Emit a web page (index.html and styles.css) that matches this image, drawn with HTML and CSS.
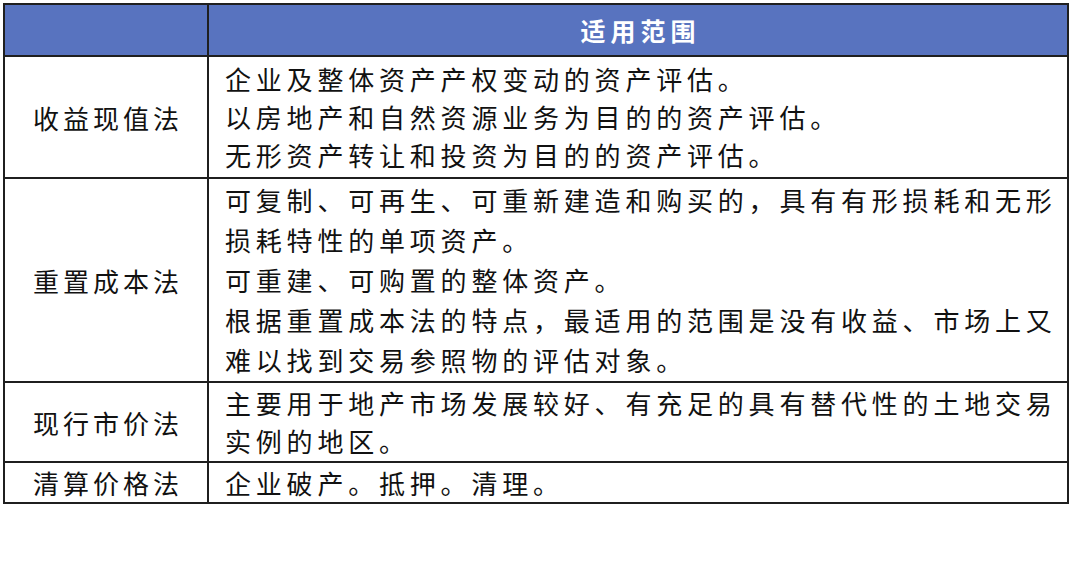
FILE: index.html
```html
<!DOCTYPE html>
<html lang="zh-CN">
<head>
<meta charset="utf-8">
<title>评估方法适用范围</title>
<link rel="stylesheet" href="styles.css">
</head>
<body>
<table class="sheet">
  <thead>
    <tr class="head-row">
      <th class="method-h"></th>
      <th class="scope-h">适用范围</th>
    </tr>
  </thead>
  <tbody>
    <tr class="r3">
      <td class="method">收益现值法</td>
      <td class="scope">
        <div class="line">企业及整体资产产权变动的资产评估。</div>
        <div class="line">以房地产和自然资源业务为目的的资产评估。</div>
        <div class="line">无形资产转让和投资为目的的资产评估。</div>
      </td>
    </tr>
    <tr class="r5">
      <td class="method">重置成本法</td>
      <td class="scope">
        <div class="line">可复制、可再生、可重新建造和购买的，具有有形损耗和无形</div>
        <div class="line">损耗特性的单项资产。</div>
        <div class="line">可重建、可购置的整体资产。</div>
        <div class="line">根据重置成本法的特点，最适用的范围是没有收益、市场上又</div>
        <div class="line">难以找到交易参照物的评估对象。</div>
      </td>
    </tr>
    <tr class="r2">
      <td class="method">现行市价法</td>
      <td class="scope">
        <div class="line">主要用于地产市场发展较好、有充足的具有替代性的土地交易</div>
        <div class="line">实例的地区。</div>
      </td>
    </tr>
    <tr class="r1">
      <td class="method">清算价格法</td>
      <td class="scope">
        <div class="line">企业破产。抵押。清理。</div>
      </td>
    </tr>
  </tbody>
</table>
</body>
</html>
```

FILE: styles.css
```css
html, body {
  margin: 0;
  padding: 0;
  background: #ffffff;
}

body {
  font-family: "Noto Sans CJK SC", "Noto Sans", sans-serif;
  color: #111111;
}

.sheet {
  margin: 3px 0 0 3px;
  width: 1066px;
  border-collapse: collapse;
  table-layout: fixed;
}

.sheet th,
.sheet td {
  border: 2px solid #1f1f1f;
  padding: 0;
}

.method-h {
  width: 202px;
}

.head-row th {
  height: 50px;
  background: #5873bf;
  color: #ffffff;
  font-size: 25px;
  font-weight: 700;
  letter-spacing: 5px;
  text-align: center;
  vertical-align: middle;
}

.scope-h {
  padding-left: 5px !important;
}

.method {
  font-size: 26px;
  letter-spacing: 4px;
  padding-left: 4px !important;
  text-align: center;
  vertical-align: middle;
}

.scope {
  font-size: 26px;
  letter-spacing: 4.8px;
  padding: 1px 0 1px 16px !important;
  vertical-align: middle;
}

.line {
  white-space: nowrap;
  line-height: 38px;
}

.r3 .scope {
  padding-top: 3px !important;
  padding-bottom: 3px !important;
}

.r5 .line {
  line-height: 40px;
}

.r2 .line {
  line-height: 38px;
}

.r1 .line {
  line-height: 37px;
}
```
